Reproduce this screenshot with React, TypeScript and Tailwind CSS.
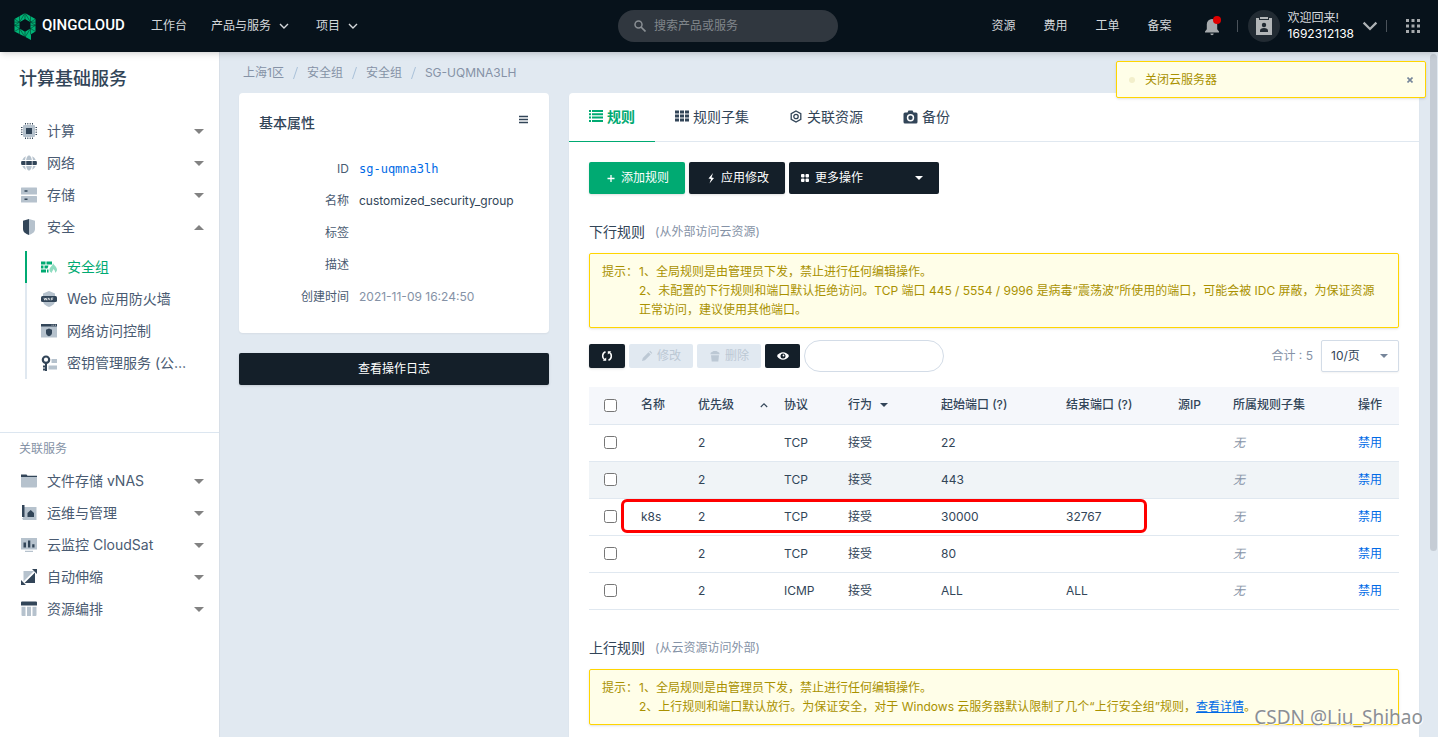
import React, { useState } from 'react';

interface Rule {
    id: number;
    name: string;
    priority: number;
    protocol: string;
    action: string;
    startPort: string;
    endPort: string;
}

interface MenuItem {
    label: string;
    icon: React.ReactNode;
    open?: boolean;
}

const DARK = '#324558';
const LIGHT = '#b6c2cd';

const rules: Rule[] = [
    { id: 1, name: '', priority: 2, protocol: 'TCP', action: '接受', startPort: '22', endPort: '' },
    { id: 2, name: '', priority: 2, protocol: 'TCP', action: '接受', startPort: '443', endPort: '' },
    { id: 3, name: 'k8s', priority: 2, protocol: 'TCP', action: '接受', startPort: '30000', endPort: '32767' },
    { id: 4, name: '', priority: 2, protocol: 'TCP', action: '接受', startPort: '80', endPort: '' },
    { id: 5, name: '', priority: 2, protocol: 'ICMP', action: '接受', startPort: 'ALL', endPort: 'ALL' },
];

const Icon = ({ children, size = 16, box = 16 }: { children: React.ReactNode; size?: number; box?: number }) => (
    <svg width={size} height={size} viewBox={`0 0 ${box} ${box}`} fill="none" className="shrink-0" aria-hidden="true">
        {children}
    </svg>
);

const Caret = ({ up = false, color = '#828282', width = 10 }: { up?: boolean; color?: string; width?: number }) => (
    <svg width={width} height={width / 2} viewBox="0 0 10 5" className="shrink-0" aria-hidden="true">
        <path d={up ? 'M0 5h10L5 0z' : 'M0 0h10L5 5z'} fill={color} />
    </svg>
);

const Chevron = ({ width = 10, up = false, color = '#d5d8db' }: { width?: number; up?: boolean; color?: string }) => (
    <svg width={width} height={width * 0.6} viewBox="0 0 10 6" fill="none" className="shrink-0" aria-hidden="true">
        <path d={up ? 'M1 5l4-4 4 4' : 'M1 1l4 4 4-4'} stroke={color} strokeWidth="1.4" />
    </svg>
);

const Logo = () => (
    <svg width="22" height="29" viewBox="0 0 22 29" className="shrink-0" aria-hidden="true">
        <path
            fillRule="evenodd"
            fill="#00b377"
            d="M11 1l10.500 6v12.500L17 22.200V28l-6-3.200L.5 19.500V7zM11 7L5.500 10.200v6.300L11 19.700l5.500-3.200v-6.300z"
        />
        <path
            d="M.5 7l5 3.200L11 1l5.500 9.200L21.500 7M5.500 3.900V10.200H.5M11 1v6M16.500 3.900v6.300h5M.5 13.300l5-3.100M.5 13.300l5 3.200M.5 13.300h5M.5 19.500l5-3L11 25.200l5.500-8.700 5 3M5.500 16.500v6M11 19.700V25M21.500 13.300l-5-3.100M21.500 13.300l-5 3.200M21.500 13.300h-5M16.500 16.500v6"
            stroke="#05261f"
            strokeWidth="0.500"
            fill="none"
        />
    </svg>
);

const serviceMenu: MenuItem[] = [
    {
        label: '计算',
        icon: (
            <Icon>
                <rect x="2" y="2" width="12" height="12" rx="1" fill={LIGHT} />
                <rect x="5" y="5" width="6" height="6" fill={DARK} />
                <path d="M4.500 0v1.500M6.800 0v1.500M9.200 0v1.500M11.500 0v1.500M4.500 14.500V16M6.800 14.500V16M9.200 14.500V16M11.500 14.500V16M0 4.500h1.500M0 6.800h1.500M0 9.200h1.500M0 11.500h1.500M14.500 4.500H16M14.500 6.800H16M14.500 9.200H16M14.500 11.500H16" stroke={DARK} />
            </Icon>
        ),
    },
    {
        label: '网络',
        icon: (
            <Icon>
                <path d="M4.800 1.200A7.500 7.500 0 0 0 1.300 5H4zM5.200 5h5.600C10.500 2.800 9.500.5 8.500.5h-1c-1 0-2 2.300-2.300 4.500zM11.200 1.200L12 5h2.700a7.500 7.500 0 0 0-3.500-3.800zM1.300 11a7.500 7.500 0 0 0 3.500 3.800L4 11zM5.200 11c.3 2.200 1.300 4.500 2.300 4.500h1c1 0 2-2.300 2.300-4.500zM12 11l-.8 3.800a7.500 7.500 0 0 0 3.500-3.800z" fill={LIGHT} />
                <path d="M.5 6H4.500v4H.5L0 8zM5.200 6h5.600v4H5.200zM11.500 6h4l.5 2-.5 2h-4z" fill={DARK} />
            </Icon>
        ),
    },
    {
        label: '存储',
        icon: (
            <Icon>
                <rect y="0.500" width="16" height="7" rx="0.500" fill={LIGHT} />
                <rect y="9" width="16" height="6.500" rx="0.500" fill={LIGHT} />
                <path d="M3.500 4h3M3.500 12.200h3" stroke={DARK} strokeWidth="1.500" />
            </Icon>
        ),
    },
    {
        label: '安全',
        open: true,
        icon: (
            <Icon>
                <path d="M8 0L2 1.800V10c0 3 2.500 4.800 6 6z" fill={DARK} />
                <path d="M8 0l6 1.800V10c0 3-2.500 4.800-6 6z" fill={LIGHT} />
            </Icon>
        ),
    },
];

const securityMenu: MenuItem[] = [
    {
        label: '安全组',
        icon: (
            <Icon>
                <path d="M0 2.500h4.500v3H0zM5.500 2.500H11v3H5.500zM0 6.500h2.500v3H0zM3.500 6.500h4L6.500 9.500h-3zM0 10.500h5v3H0zM6 10.500h1.500v3H6z" fill="#00aa72" />
                <path d="M12 4c.5 2 4 3.800 4 6.800 0 1.500-.8 2.500-2 2.900.3-1.500-.2-2.400-1.500-3.700-.2 1.200-1.500 2-1.600 3.700-1.200-.3-2.400-1.300-2.400-3 0-2.600 3.300-3.500 3.500-6.700z" fill="#8fdcc0" />
            </Icon>
        ),
    },
    {
        label: 'Web 应用防火墙',
        icon: (
            <Icon>
                <path d="M8 0l6 2.500V10c0 3-2.800 4.800-6 6-3.200-1.200-6-3-6-6V2.500z" fill={LIGHT} />
                <rect y="5" width="16" height="6" rx="1.500" fill={DARK} />
                <path d="M3 6.800l.7 2.400.8-2.200.8 2.200.7-2.400M6.800 9.300l1-2.400 1 2.400M10.300 9.300V7h2M10.300 8.200H12" stroke="#fff" strokeWidth="0.700" />
            </Icon>
        ),
    },
    {
        label: '网络访问控制',
        icon: (
            <Icon>
                <path d="M0 1h16v13.500H0z" fill={LIGHT} />
                <path d="M0 1h16v2.500H0z" fill={DARK} />
                <path d="M10.500 2.200h1M12.200 2.200h1M14 2.200h1" stroke="#fff" strokeWidth="0.700" />
                <path d="M8 5.500l3 1.200v3.200c0 1.500-1.300 2.500-3 3.300-1.700-.8-3-1.800-3-3.300V6.700z" fill={DARK} />
            </Icon>
        ),
    },
    {
        label: '密钥管理服务 (公…',
        icon: (
            <Icon>
                <circle cx="5" cy="4.700" r="3.200" stroke={DARK} strokeWidth="2.200" />
                <path d="M5 8v8M2 11.500h3M2 14.500h3" stroke={DARK} strokeWidth="2" />
                <path d="M10.500 4H16v4h-5.500zM7.500 10.500H16v4H7.500z" fill={LIGHT} />
            </Icon>
        ),
    },
];

const relatedMenu: MenuItem[] = [
    {
        label: '文件存储 vNAS',
        icon: (
            <Icon>
                <path d="M0 1.500h5.500l1 1.200H16V5H0z" fill={DARK} />
                <path d="M0 4h16v9.500a1 1 0 0 1-1 1H1a1 1 0 0 1-1-1z" fill={LIGHT} />
            </Icon>
        ),
    },
    {
        label: '运维与管理',
        icon: (
            <Icon>
                <path d="M2 2h13.500v13H2z" fill={LIGHT} />
                <path d="M1 0h2.500v12H1z" fill={DARK} />
                <path d="M1 13h3v2H2z" fill={LIGHT} />
                <path d="M9.700 5L13 8v4H6.500V8z" fill={DARK} />
            </Icon>
        ),
    },
    {
        label: '云监控 CloudSat',
        icon: (
            <Icon>
                <path d="M0 1h16v11.500H0zM4 13.800h8v1.200H4z" fill={LIGHT} />
                <path d="M2.500 5.500H5V10.500H2.500zM7 3.500h2.300v7H7zM11.200 7.300h2.300v3.200h-2.300z" fill={DARK} />
            </Icon>
        ),
    },
    {
        label: '自动伸缩',
        icon: (
            <Icon>
                <path d="M2.500 2H13L2.500 12.500z" fill={LIGHT} />
                <path d="M14 3.500V14H3.500zM11 0h5v5zM0 11v5h5z" fill={DARK} />
            </Icon>
        ),
    },
    {
        label: '资源编排',
        icon: (
            <Icon>
                <path d="M1 .5h14a1 1 0 0 1 1 1V4.500H0v-3a1 1 0 0 1 1-1z" fill={DARK} />
                <path d="M.5 5.700h4V15h-3a1 1 0 0 1-1-1zM6 5.700h4V15H6zM11.500 5.700h4V14a1 1 0 0 1-1 1h-3z" fill={LIGHT} />
            </Icon>
        ),
    },
];

const tabs: MenuItem[] = [
    {
        label: '规则',
        icon: (
            <Icon size={14} box={14}>
                <path d="M0 1h2M0 4.300h2M0 7.600h2M0 11h2M3 1h11M3 4.300h11M3 7.600h11M3 11h11" stroke="#00aa72" strokeWidth="2" />
            </Icon>
        ),
    },
    {
        label: '规则子集',
        icon: (
            <Icon size={14} box={14}>
                <path d="M0 2h4M5 2h4M10 2h4M0 6h4M5 6h4M10 6h4M0 10h4M5 10h4M10 10h4" stroke={DARK} strokeWidth="3" />
            </Icon>
        ),
    },
    {
        label: '关联资源',
        icon: (
            <Icon size={14} box={14}>
                <path d="M7 1L11.800 3.700v5.600L7 12 2.200 9.300V3.700z" stroke={DARK} strokeWidth="1.300" />
                <circle cx="7" cy="6.500" r="2.200" stroke={DARK} strokeWidth="1.300" />
            </Icon>
        ),
    },
    {
        label: '备份',
        icon: (
            <Icon size={15} box={15}>
                <path fillRule="evenodd" d="M4.500 2.500L5.500.5h4l1 2H13A1.500 1.500 0 0 1 14.500 4v8A1.500 1.500 0 0 1 13 13.500H2A1.500 1.500 0 0 1 .5 12V4A1.500 1.500 0 0 1 2 2.500zM7.500 4a3.700 3.700 0 1 0 0 7.400 3.700 3.700 0 0 0 0-7.400zM7.500 5.500a2.200 2.200 0 1 1 0 4.400 2.200 2.200 0 0 1 0-4.400z" fill={DARK} />
            </Icon>
        ),
    },
];

const breadcrumbs = ['上海1区', '安全组', '安全组', 'SG-UQMNA3LH'];

const Header = () => (
    <header className="relative z-10 flex h-[52px] shrink-0 items-center bg-[#07121b] pr-[18px] pl-[14px] text-xs text-[#d5d8db] shadow-md">
        <a href="#" className="flex w-[109px] items-center gap-1.5">
            <Logo />
            <span className="font-[Roboto,sans-serif] text-[15px] font-medium text-white">QINGCLOUD</span>
        </a>
        <nav className="ml-7 flex items-center">
            <a href="#">工作台</a>
            <button className="ml-6 flex items-center gap-2">
                产品与服务
                <Chevron />
            </button>
            <button className="ml-[27px] flex items-center gap-2">
                项目
                <Chevron />
            </button>
        </nav>
        <label className="ml-[260px] flex h-8 w-[220px] items-center gap-2 rounded-full bg-[#30373f] px-4">
            <Icon size={12} box={12}>
                <circle cx="4.500" cy="4.500" r="3.500" stroke="#8a8f94" strokeWidth="1.500" />
                <path d="M7 7l4.500 4.500" stroke="#8a8f94" strokeWidth="1.700" />
            </Icon>
            <input aria-label="搜索" placeholder="搜索产品或服务" className="w-full min-w-0 bg-transparent outline-none placeholder:text-[#80868b]" />
        </label>
        <nav className="ml-auto flex items-center gap-7">
            <a href="#">资源</a>
            <a href="#">费用</a>
            <a href="#">工单</a>
            <a href="#">备案</a>
        </nav>
        <button aria-label="消息" className="ml-[33px]">
            <svg width="16" height="20" viewBox="0 0 16 20" aria-hidden="true">
                <path d="M7 3a5.200 5.200 0 0 1 5.200 5.200v5L14 15.500v1H0v-1l1.800-2.300v-5A5.200 5.200 0 0 1 7 3zM5.300 17.500h3.400a1.700 1.700 0 0 1-3.400 0z" fill="#a6aaad" />
                <circle cx="12" cy="4" r="4" fill="#e00000" />
            </svg>
        </button>
        <span className="ml-4 h-3 w-px bg-[#4a525a]" />
        <button className="ml-2.5 flex items-center gap-2 text-left">
            <span className="flex size-8 items-center justify-center rounded-full bg-[#222b33]">
                <svg width="18" height="18" viewBox="0 0 18 18" aria-hidden="true">
                    <path d="M1 1h3v2h10V1h3v17H1zM5 0h8v2H5z" fill="#b3b6b8" />
                    <circle cx="9" cy="8" r="2.200" fill="#222b33" />
                    <path d="M5 15v-1.500C5 12 6.500 11 9 11s4 1 4 2.500V15z" fill="#222b33" />
                </svg>
            </span>
            <span className="flex flex-col leading-4">
                <span>欢迎回来!</span>
                <span className="text-white">1692312138</span>
            </span>
            <Chevron width={16} color="#aeb2b5" />
        </button>
        <span className="ml-2 h-3 w-px bg-[#4a525a]" />
        <button aria-label="全部应用" className="ml-[19px]">
            <Icon size={14} box={14}>
                <path d="M0 1.500h3M5.500 1.500h3M11 1.500h3M0 7h3M5.500 7h3M11 7h3M0 12.500h3M5.500 12.500h3M11 12.500h3" stroke="#a6aaad" strokeWidth="3" />
            </Icon>
        </button>
    </header>
);

const MenuButton = ({ item }: { item: MenuItem }) => (
    <button className="flex h-8 w-full items-center gap-2.5 pr-[15px] pl-[21px] text-left text-sm text-[#4a5b72]">
        {item.icon}
        <span className="flex-1">{item.label}</span>
        <Caret up={item.open} />
    </button>
);

const Sidebar = () => (
    <aside className="w-[220px] shrink-0 overflow-hidden border-r border-[#d8dfe7] bg-white">
        <h1 className="mb-[9px] pl-[19px] text-lg leading-[54px] font-medium text-[#324558]">计算基础服务</h1>
        {serviceMenu.map((item) => (
            <MenuButton key={item.label} item={item} />
        ))}
        <ul className="mt-2 ml-[25px]">
            {securityMenu.map((item, i) => (
                <li key={item.label} className={i === 0 ? 'border-l-2 border-[#00aa72] text-[#00aa72]' : 'border-l-2 border-[#e0e8f0] text-[#4a5b72]'}>
                    <a href="#" className="flex h-8 items-center gap-2.5 pl-3.5 text-sm whitespace-nowrap">
                        {item.icon}
                        {item.label}
                    </a>
                </li>
            ))}
        </ul>
        <div className="mt-[53px] border-t border-[#dce6f0]">
            <h2 className="pl-[19px] text-xs leading-8 text-[#8592a6]">关联服务</h2>
            {relatedMenu.map((item) => (
                <MenuButton key={item.label} item={item} />
            ))}
        </div>
    </aside>
);

const Property = ({ label, children }: { label: string; children?: React.ReactNode }) => (
    <div className="flex gap-2.5 leading-8">
        <dt className="w-[90px] shrink-0 text-right text-[#4a5b72]">{label}</dt>
        <dd>{children}</dd>
    </div>
);

const PropertyCard = () => (
    <div className="w-[310px] shrink-0">
        <section className="rounded-sm bg-white p-5 text-xs shadow-xs">
            <div className="mb-5 flex justify-between">
                <h2 className="text-sm leading-5 font-medium">基本属性</h2>
                <button aria-label="菜单" className="h-3">
                    <Icon size={10} box={10}>
                        <path d="M0 2.500h9M0 5.500h9M0 8.500h9" stroke={DARK} strokeWidth="1.300" />
                    </Icon>
                </button>
            </div>
            <dl>
                <Property label="ID">
                    <a href="#" className="font-['DejaVu_Sans_Mono',monospace] text-[#006ae6]">sg-uqmna3lh</a>
                </Property>
                <Property label="名称">customized_security_group</Property>
                <Property label="标签" />
                <Property label="描述" />
                <Property label="创建时间">
                    <span className="text-[#8592a6]">2021-11-09 16:24:50</span>
                </Property>
            </dl>
        </section>
        <button className="mt-5 h-8 w-full rounded-xs bg-[#141f29] text-xs text-white shadow-sm">查看操作日志</button>
    </div>
);

const SectionTitle = ({ title, note }: { title: string; note: string }) => (
    <h2 className="mt-[26px] mb-[9px] flex items-center text-sm leading-6">
        {title}
        <small className="ml-2.5 text-xs text-[#8592a6]">({note})</small>
    </h2>
);

const Notice = ({ children }: { children: React.ReactNode }) => (
    <div className="flex rounded-xs border border-[#ffd500] bg-[#fffee8] px-3 py-2 text-xs leading-[19px] text-[#a99100] shadow-sm">
        <span className="w-[37px] shrink-0">提示：</span>
        <ol>{children}</ol>
    </div>
);

const RuleTable = () => (
    <div className="relative mt-[15px]">
        <table className="w-full table-fixed text-left text-xs">
            <colgroup>
                <col className="w-[40px]" />
                <col className="w-[57px]" />
                <col className="w-[86px]" />
                <col className="w-[64px]" />
                <col className="w-[93px]" />
                <col className="w-[125px]" />
                <col className="w-[112px]" />
                <col className="w-[55px]" />
                <col className="w-[125px]" />
                <col className="w-[53px]" />
            </colgroup>
            <thead>
                <tr className="h-[37px] border-b border-[#e0e8f0] bg-[#f5f7fb] whitespace-nowrap [&>th]:pl-3 [&>th]:font-medium">
                    <th>
                        <input type="checkbox" aria-label="全选" className="ml-[3px] block" />
                    </th>
                    <th>名称</th>
                    <th>
                        <span className="flex items-center justify-between pr-1">
                            优先级
                            <Chevron width={8} up color={DARK} />
                        </span>
                    </th>
                    <th>协议</th>
                    <th>
                        <span className="flex items-center gap-2">
                            行为
                            <Caret width={8} color={DARK} />
                        </span>
                    </th>
                    <th>起始端口 (?)</th>
                    <th>结束端口 (?)</th>
                    <th>源IP</th>
                    <th>所属规则子集</th>
                    <th>操作</th>
                </tr>
            </thead>
            <tbody>
                {rules.map((rule) => (
                    <tr
                        key={rule.id}
                        className={
                            rule.id === 2
                                ? 'h-[37px] border-b border-[#e0e8f0] bg-[#f0f4f7] [&>td]:pl-3'
                                : 'h-[37px] border-b border-[#e0e8f0] [&>td]:pl-3'
                        }
                    >
                        <td>
                            <input type="checkbox" aria-label={`规则 ${rule.id}`} className="ml-[3px] block" />
                        </td>
                        <td>{rule.name}</td>
                        <td>{rule.priority}</td>
                        <td>{rule.protocol}</td>
                        <td>{rule.action}</td>
                        <td>{rule.startPort}</td>
                        <td>{rule.endPort}</td>
                        <td />
                        <td className="text-[#8592a6] italic">无</td>
                        <td>
                            <a href="#" className="text-[#006ae6]">禁用</a>
                        </td>
                    </tr>
                ))}
            </tbody>
        </table>
        {/* highlight around the k8s rule */}
        <div className="pointer-events-none absolute top-[112px] right-[252px] left-8 h-[34px] rounded-md border-3 border-[#ff0000]" />
    </div>
);

const RulePanel = () => {
    const [activeTab, setActiveTab] = useState('规则');

    return (
        <section className="min-w-0 flex-1 rounded-sm bg-white pb-10 shadow-xs">
            <nav className="flex h-[49px] border-b border-[#e0e8f0] text-sm">
                {tabs.map((tab) => (
                    <button
                        key={tab.label}
                        onClick={() => setActiveTab(tab.label)}
                        className={
                            tab.label === activeTab
                                ? '-mb-px flex items-center gap-1 border-b border-[#00aa72] px-5 font-bold text-[#00aa72]'
                                : '-mb-px flex items-center gap-1 border-b border-transparent px-5'
                        }
                    >
                        {tab.icon}
                        {tab.label}
                    </button>
                ))}
            </nav>
            <div className="px-5 pt-5">
                <div className="flex gap-1 text-xs text-white">
                    <button className="flex h-8 items-center gap-1 rounded-xs bg-[#00aa72] px-4 shadow-sm">
                        <Icon size={12} box={12}>
                            <path d="M6 3v7M2.500 6.500h7" stroke="#fff" strokeWidth="1.300" />
                        </Icon>
                        添加规则
                    </button>
                    <button className="flex h-8 items-center gap-1 rounded-xs bg-[#141f29] px-4 shadow-sm">
                        <Icon size={12} box={12}>
                            <path d="M8 1L3.500 6.500l2.500.6L4.500 11.500l4.500-5.500-2.500-.6z" fill="#fff" />
                        </Icon>
                        应用修改
                    </button>
                    <button className="flex h-8 w-[150px] items-center gap-1 rounded-xs bg-[#141f29] pr-4 pl-2.5">
                        <Icon size={12} box={12}>
                            <g fill="#fff">
                                <rect x="2" y="2" width="3.500" height="3.500" rx="1" />
                                <rect x="6.500" y="2" width="3.500" height="3.500" rx="1" />
                                <rect x="2" y="6.500" width="3.500" height="3.500" rx="1" />
                                <rect x="6.500" y="6.500" width="3.500" height="3.500" rx="1" />
                            </g>
                        </Icon>
                        <span className="flex-1 text-left">更多操作</span>
                        <Caret width={8} color="#fff" />
                    </button>
                </div>

                <SectionTitle title="下行规则" note="从外部访问云资源" />
                <Notice>
                    <li>1、全局规则是由管理员下发，禁止进行任何编辑操作。</li>
                    <li>2、未配置的下行规则和端口默认拒绝访问。TCP 端口 445 / 5554 / 9996 是病毒“震荡波”所使用的端口，可能会被 IDC 屏蔽，为保证资源正常访问，建议使用其他端口。</li>
                </Notice>

                <div className="mt-3 flex items-center gap-1 text-xs">
                    <button aria-label="刷新" className="flex h-6 w-9 items-center justify-center rounded-xs bg-[#141f29] shadow-sm">
                        <Icon size={12} box={12}>
                            <path d="M4.500 1.800a4.400 4.400 0 0 0-.5 8M7.500 10.200a4.400 4.400 0 0 0 .5-8" stroke="#fff" strokeWidth="1.500" />
                            <path d="M1.700 10.800h3.500V7.500zM10.300 1.200H6.800v3.300z" fill="#fff" />
                        </Icon>
                    </button>
                    <button disabled className="flex h-6 items-center gap-1 rounded-xs bg-[#e1e9f1] px-3 text-[#bcc8d4]">
                        <Icon size={12} box={12}>
                            <path d="M1 11l.8-3L7.500 2.300l2.200 2.200L4 10.200zM8.200 1.600l.9-.9 2.200 2.200-.9.900z" fill="#bcc8d4" />
                        </Icon>
                        修改
                    </button>
                    <button disabled className="flex h-6 items-center gap-1 rounded-xs bg-[#e1e9f1] px-3 text-[#bcc8d4]">
                        <Icon size={12} box={12}>
                            <path d="M1.500 3.500A1.500 1.500 0 0 1 3 2L4.500 1h3L9 2a1.500 1.500 0 0 1 1.500 1.500v.7h-9zM2 5.200h8l-.7 6.300H2.700z" fill="#bcc8d4" />
                        </Icon>
                        删除
                    </button>
                    <button aria-label="显示" className="flex h-6 w-[35px] items-center justify-center rounded-xs bg-[#141f29]">
                        <Icon size={12} box={12}>
                            <path d="M0 6c1.500-2.500 3.500-3.700 6-3.700S10.500 3.500 12 6c-1.500 2.500-3.500 3.700-6 3.700S1.500 8.500 0 6z" fill="#fff" />
                            <circle cx="6" cy="6" r="2.500" fill="#141f29" />
                            <circle cx="6.500" cy="5.500" r="0.900" fill="#fff" />
                        </Icon>
                    </button>
                    <input aria-label="搜索规则" className="h-8 w-[140px] rounded-full border border-[#d3dce7] px-3 outline-none" />
                    <span className="mr-1 ml-auto text-[#8592a6]">合计 : 5</span>
                    <div className="relative">
                        <select aria-label="每页条数" className="h-8 w-[78px] appearance-none rounded-xs border border-[#d3dce7] bg-white pl-[9px] shadow-xs">
                            <option>10/页</option>
                            <option>20/页</option>
                        </select>
                        <span className="pointer-events-none absolute inset-y-0 right-[11px] flex items-center">
                            <Caret width={8} color="#76859a" />
                        </span>
                    </div>
                </div>

                <RuleTable />

                <SectionTitle title="上行规则" note="从云资源访问外部" />
                <Notice>
                    <li>1、全局规则是由管理员下发，禁止进行任何编辑操作。</li>
                    <li>
                        2、上行规则和端口默认放行。为保证安全，对于 Windows 云服务器默认限制了几个“上行安全组”规则，
                        <a href="#" className="text-[#006ae6] underline">查看详情</a>。
                    </li>
                </Notice>
            </div>
        </section>
    );
};

const Toast = () => (
    <div role="status" className="absolute top-[9px] right-3 flex h-[37px] w-[310px] items-center rounded-xs border border-[#ffd500] bg-[#fffee8] pr-2.5 pl-3 text-xs text-[#a99100] shadow-sm">
        <span className="mr-2.5 size-1.5 rounded-full bg-[#f3efcb]" />
        <span className="flex-1">关闭云服务器</span>
        <button aria-label="关闭" className="px-0.5">
            <Icon size={6} box={6}>
                <path d="M.5.5l5 5M5.500.5l-5 5" stroke="#76859a" strokeWidth="1.600" />
            </Icon>
        </button>
    </div>
);

const App = () => (
    <div className="flex h-screen flex-col overflow-hidden bg-[#e1e9f1] font-[Inter,'Noto_Sans_CJK_SC',sans-serif] text-[#324558]">
        <Header />
        <div className="relative flex min-h-0 flex-1">
            <Sidebar />
            <main className="min-w-0 flex-1 overflow-y-auto px-[19px] [scrollbar-width:none]">
                <nav aria-label="breadcrumb" className="flex h-[41px] items-center pl-1 text-xs text-[#8592a6]">
                    {breadcrumbs.map((crumb, i) => (
                        <React.Fragment key={i}>
                            {i > 0 && (
                                <svg width="23" height="12" viewBox="0 0 23 12" fill="none" aria-hidden="true">
                                    <path d="M13.500 0l-4 12" stroke="#a9c1d9" />
                                </svg>
                            )}
                            <a href="#">{crumb}</a>
                        </React.Fragment>
                    ))}
                </nav>
                <div className="flex items-start gap-5">
                    <PropertyCard />
                    <RulePanel />
                </div>
            </main>
            <div className="absolute top-0.5 right-px h-[497px] w-[7px] rounded-full bg-[#c5ccd5]" />
            <Toast />
            <div className="pointer-events-none absolute right-[15px] bottom-2 font-['Noto_Sans',sans-serif] text-[19px] leading-6 text-[#8b8f94] [text-shadow:1px_1px_0_#ffffffcc]">
                CSDN @Liu_Shihao
            </div>
        </div>
    </div>
);

export default App;
